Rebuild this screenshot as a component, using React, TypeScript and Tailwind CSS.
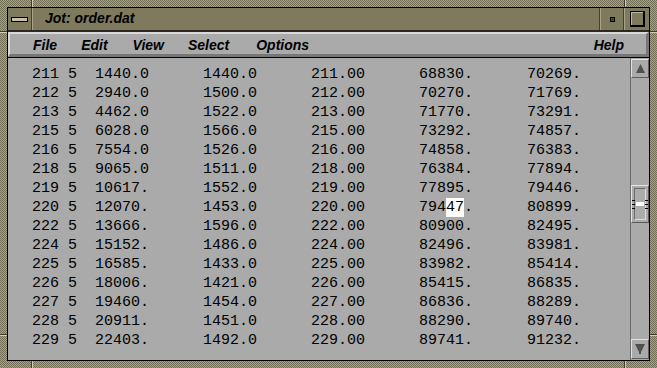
import React from "react";

const rows: string[][] = [
  ["211", "5", "1440.0", "1440.0", "211.00", "68830.", "70269."],
  ["212", "5", "2940.0", "1500.0", "212.00", "70270.", "71769."],
  ["213", "5", "4462.0", "1522.0", "213.00", "71770.", "73291."],
  ["215", "5", "6028.0", "1566.0", "215.00", "73292.", "74857."],
  ["216", "5", "7554.0", "1526.0", "216.00", "74858.", "76383."],
  ["218", "5", "9065.0", "1511.0", "218.00", "76384.", "77894."],
  ["219", "5", "10617.", "1552.0", "219.00", "77895.", "79446."],
  ["220", "5", "12070.", "1453.0", "220.00", "79447.", "80899."],
  ["222", "5", "13666.", "1596.0", "222.00", "80900.", "82495."],
  ["224", "5", "15152.", "1486.0", "224.00", "82496.", "83981."],
  ["225", "5", "16585.", "1433.0", "225.00", "83982.", "85414."],
  ["226", "5", "18006.", "1421.0", "226.00", "85415.", "86835."],
  ["227", "5", "19460.", "1454.0", "227.00", "86836.", "88289."],
  ["228", "5", "20911.", "1451.0", "228.00", "88290.", "89740."],
  ["229", "5", "22403.", "1492.0", "229.00", "89741.", "91232."],
];

const head = (r: string[]) =>
  r[0].padEnd(4) + r[1].padEnd(3) + r[2].padEnd(12) + r[3].padEnd(12) + r[4].padEnd(12);

function Row({ r }: { r: string[] }) {
  if (r[0] === "220") {
    const c5 = r[5].padEnd(12);
    return (
      <div>
        {head(r) + c5.slice(0, 3)}
        <span className="bg-white py-px">{c5.slice(3, 5)}</span>
        {c5.slice(5) + r[6]}
      </div>
    );
  }
  return <div>{head(r) + r[5].padEnd(12) + r[6]}</div>;
}

function VNotch({ left, top }: { left: number; top: number }) {
  return (
    <div className="absolute flex h-[7px]" style={{ left, top }}>
      <div className="w-px bg-[#3f3c2c]" />
      <div className="w-px bg-[#d2cdb3]" />
    </div>
  );
}
function HNotch({ left, top }: { left: number; top: number }) {
  return (
    <div className="absolute flex flex-col w-[7px]" style={{ left, top }}>
      <div className="h-px bg-[#3f3c2c]" />
      <div className="h-px bg-[#d2cdb3]" />
    </div>
  );
}

function Sep() {
  return (
    <div className="flex h-full">
      <div className="w-px bg-[#45412f]" />
      <div className="w-px bg-[#aaa58a]" />
    </div>
  );
}

export default function App() {
  const menuFont = "font-['Liberation_Sans',Arial,sans-serif] italic font-bold text-[14px]";
  return (
    <div className="relative w-[657px] h-[368px] p-[7px] bg-[conic-gradient(#a6a187_25%,#726d55_0_50%,#a6a187_0_75%,#726d55_0)] bg-[length:2px_2px]">
      <VNotch left={31} top={0} />
      <VNotch left={624} top={0} />
      <VNotch left={31} top={361} />
      <VNotch left={624} top={361} />
      <HNotch left={0} top={31} />
      <HNotch left={650} top={31} />
      <HNotch left={0} top={334} />
      <HNotch left={650} top={334} />

      <div className="w-full h-full border border-black flex flex-col bg-[#aaaaaa]">
        {/* title bar */}
        <div className="h-[22px] flex bg-[#7f7a5d] shrink-0">
          <div className="w-[23px] flex items-center justify-center">
            <div className="w-[17px] h-[5px] border border-black bg-[#c6c1a5]" />
          </div>
          <Sep />
          <div className={`flex-1 pl-[12px] leading-[20px] text-black ${menuFont}`}>Jot: order.dat</div>
          <Sep />
          <div className="w-[22px] flex items-center justify-center">
            <div className="w-[5px] h-[5px] border border-black bg-[#4a4636]" />
          </div>
          <Sep />
          <div className="w-[24px] flex items-center justify-center">
            <div className="w-[15px] h-[16px] border border-black border-r-2 border-b-2 bg-[#7f7a5d]">
              <div className="w-full h-full border-t border-l border-[#bdb89c]" />
            </div>
          </div>
        </div>
        <div className="h-[2px] bg-[#2b2a22] shrink-0" />

        {/* menu bar */}
        <div
          className={`h-[25px] shrink-0 flex pt-[3px] leading-[17px] text-black border-t-2 border-l-2 border-t-[#d8d8d8] border-l-[#d8d8d8] border-b-[3px] border-r-[3px] border-b-[#777777] border-r-[#777777] bg-[#aaaaaa] pl-[23px] pr-[22px] gap-[24px] ${menuFont}`}
        >
          <span>File</span>
          <span>Edit</span>
          <span className="ml-px">View</span>
          <span>Select</span>
          <span className="ml-[3px]">Options</span>
          <span className="ml-auto">Help</span>
        </div>
        <div className="h-px bg-black shrink-0" />

        {/* content */}
        <div className="flex-1 flex min-h-0">
          <div className="flex-1 pl-[24px] pt-[7px] overflow-hidden whitespace-pre text-black font-['Liberation_Mono','Courier_New',monospace] text-[15px] leading-[19px]">
            {rows.map((r) => (
              <Row key={r[0]} r={r} />
            ))}
          </div>

          {/* scrollbar */}
          <div className="w-[19px] border-l border-[#6a6a6a] flex flex-col pt-px pb-px bg-[#aaaaaa]">
            <div className="h-[19px] border-t border-l border-t-[#e2e2e2] border-l-[#e2e2e2] border-b border-r border-b-[#5e5e5e] border-r-[#5e5e5e] flex items-center justify-center">
              <svg width="9" height="9" viewBox="0 0 9 9">
                <polygon points="4.5,0 9,9 0,9" fill="#505050" />
              </svg>
            </div>
            <div className="flex-1 flex flex-col">
              <div className="mt-[107px] relative h-[38px] border-t border-l border-t-[#e6e6e6] border-l-[#e6e6e6] border-b border-r border-b-[#5a5a5a] border-r-[#5a5a5a] flex items-center justify-center">
                <div className="w-[12px] h-[32px] border border-[#6c6c6c] border-r-[#dcdcdc] border-b-[#dcdcdc] bg-[#acacac] flex items-center justify-center">
                  <div className="w-[8px] h-[4px] bg-white" />
                </div>
                <div className="absolute left-0 top-[14px] flex flex-col gap-[3px]">
                  <div className="w-[3px] h-px bg-black" />
                  <div className="w-[3px] h-px bg-black" />
                  <div className="w-[3px] h-px bg-black" />
                </div>
                <div className="absolute right-0 top-[14px] flex flex-col gap-[3px]">
                  <div className="w-[3px] h-px bg-black" />
                  <div className="w-[3px] h-px bg-black" />
                  <div className="w-[3px] h-px bg-black" />
                </div>
              </div>
            </div>
            <div className="h-[20px] border-t border-l border-t-[#e2e2e2] border-l-[#e2e2e2] border-b border-r border-b-[#5e5e5e] border-r-[#5e5e5e] flex items-center justify-center">
              <svg width="10" height="10" viewBox="0 0 10 10">
                <polygon points="0,0 10,0 6,8 6,10 4,10 4,8" fill="#505050" />
              </svg>
            </div>
          </div>
        </div>
      </div>
    </div>
  );
}
